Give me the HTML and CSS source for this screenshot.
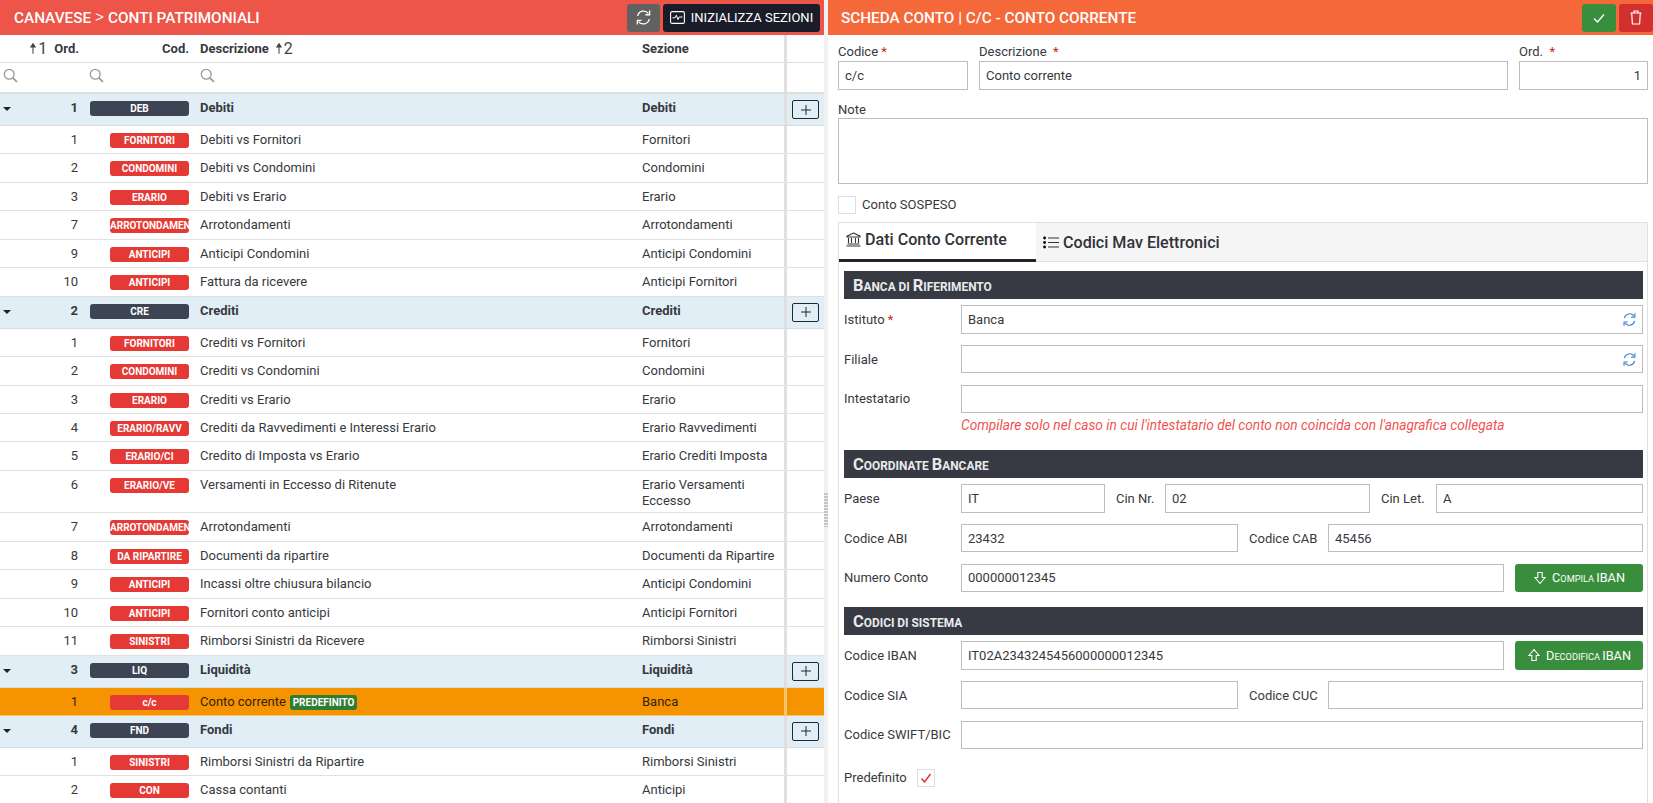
FILE: index.html
```html
<!DOCTYPE html>
<html lang="it">
<head>
    <meta charset="UTF-8">
    <meta name="viewport" content="width=device-width, initial-scale=1.0">
    <title>Conti patrimoniali</title>
    <link rel="stylesheet" href="styles.css">
</head>
<body>
    <svg class="icon-defs" width="0" height="0">
        <defs>
            <symbol id="i-search" viewBox="0 0 14 14"><circle cx="5.8" cy="5.8" r="4.6" fill="none" stroke="currentColor" stroke-width="1.2"/><path d="M9.2 9.2 L13 13" fill="none" stroke="currentColor" stroke-width="1.6"/></symbol>
            <symbol id="i-sync" viewBox="0 0 16 16"><path d="M2.6 6.6 A5.6 5.6 0 0 1 12.6 4.2 M13.4 9.4 A5.6 5.6 0 0 1 3.4 11.8" fill="none" stroke="currentColor" stroke-width="1.2"/><path d="M13.8 1.4 V5.4 H9.8 M2.2 14.6 V10.6 H6.2" fill="none" stroke="currentColor" stroke-width="1.2"/></symbol>
            <symbol id="i-up" viewBox="0 0 8 16"><path d="M4 15 V3 M1 6 L4 1.5 L7 6 Z" fill="currentColor" stroke="currentColor" stroke-width="1.4"/></symbol>
            <symbol id="i-plus" viewBox="0 0 12 12"><path d="M6 1 V11 M1 6 H11" fill="none" stroke="currentColor" stroke-width="1"/></symbol>
            <symbol id="i-in" viewBox="0 0 14 14"><path d="M4.8 1.5 H9.2 V6.5 H12 L7 12.5 L2 6.5 H4.8 Z" fill="none" stroke="currentColor" stroke-width="1.1"/></symbol>
            <symbol id="i-out" viewBox="0 0 14 14"><path d="M4.8 12.5 H9.2 V7.5 H12 L7 1.5 L2 7.5 H4.8 Z" fill="none" stroke="currentColor" stroke-width="1.1"/></symbol>
        </defs>
    </svg>

    <div class="page">
        <section class="panel-left">
            <header class="bar bar-red">
                <h1 class="bar-title">CANAVESE <span class="crumb">&gt;</span> CONTI PATRIMONIALI</h1>
                <div class="bar-actions">
                    <button class="btn btn-grey"><svg width="17" height="17"><use href="#i-sync"/></svg></button>
                    <button class="btn btn-dark">
                        <svg width="15" height="13" viewBox="0 0 15 13"><rect x="0.6" y="0.6" width="13.8" height="11.8" rx="1.5" fill="none" stroke="currentColor" stroke-width="1.1"/><path d="M2.5 6.8 H5 L6.3 4.2 L8 8.6 L9.2 6 H12.5" fill="none" stroke="currentColor" stroke-width="1"/></svg>
                        INIZIALIZZA SEZIONI
                    </button>
                </div>
            </header>

            <div class="row row-head">
                <div class="c-ord"><span class="sort"><svg width="6" height="13"><use href="#i-up"/></svg>1</span><b>Ord.</b></div>
                <div class="c-cod"><b>Cod.</b></div>
                <div class="c-desc"><b>Descrizione</b><span class="sort sort-after"><svg width="6" height="13"><use href="#i-up"/></svg>2</span></div>
                <div class="c-sez"><b>Sezione</b></div>
                <div class="c-act"></div>
            </div>
            <div class="row row-filter">
                <div class="c-ord"><svg class="lens" width="15" height="15"><use href="#i-search"/></svg></div>
                <div class="c-cod"><svg class="lens" width="15" height="15"><use href="#i-search"/></svg></div>
                <div class="c-desc"><svg class="lens" width="15" height="15"><use href="#i-search"/></svg></div>
                <div class="c-sez"></div>
                <div class="c-act"></div>
            </div>

            <div class="row row-group">
                <div class="c-ord"><i class="caret"></i>1</div>
                <div class="c-cod"><span class="tag tag-dark">DEB</span></div>
                <div class="c-desc">Debiti</div>
                <div class="c-sez">Debiti</div>
                <div class="c-act"><button class="btn-add"><svg width="12" height="12"><use href="#i-plus"/></svg></button></div>
            </div>
            <div class="row"><div class="c-ord">1</div><div class="c-cod"><span class="tag">FORNITORI</span></div><div class="c-desc">Debiti vs Fornitori</div><div class="c-sez">Fornitori</div><div class="c-act"></div></div>
            <div class="row"><div class="c-ord">2</div><div class="c-cod"><span class="tag">CONDOMINI</span></div><div class="c-desc">Debiti vs Condomini</div><div class="c-sez">Condomini</div><div class="c-act"></div></div>
            <div class="row"><div class="c-ord">3</div><div class="c-cod"><span class="tag">ERARIO</span></div><div class="c-desc">Debiti vs Erario</div><div class="c-sez">Erario</div><div class="c-act"></div></div>
            <div class="row"><div class="c-ord">7</div><div class="c-cod"><span class="tag">ARROTONDAMENTI</span></div><div class="c-desc">Arrotondamenti</div><div class="c-sez">Arrotondamenti</div><div class="c-act"></div></div>
            <div class="row"><div class="c-ord">9</div><div class="c-cod"><span class="tag">ANTICIPI</span></div><div class="c-desc">Anticipi Condomini</div><div class="c-sez">Anticipi Condomini</div><div class="c-act"></div></div>
            <div class="row"><div class="c-ord">10</div><div class="c-cod"><span class="tag">ANTICIPI</span></div><div class="c-desc">Fattura da ricevere</div><div class="c-sez">Anticipi Fornitori</div><div class="c-act"></div></div>

            <div class="row row-group">
                <div class="c-ord"><i class="caret"></i>2</div>
                <div class="c-cod"><span class="tag tag-dark">CRE</span></div>
                <div class="c-desc">Crediti</div>
                <div class="c-sez">Crediti</div>
                <div class="c-act"><button class="btn-add"><svg width="12" height="12"><use href="#i-plus"/></svg></button></div>
            </div>
            <div class="row"><div class="c-ord">1</div><div class="c-cod"><span class="tag">FORNITORI</span></div><div class="c-desc">Crediti vs Fornitori</div><div class="c-sez">Fornitori</div><div class="c-act"></div></div>
            <div class="row"><div class="c-ord">2</div><div class="c-cod"><span class="tag">CONDOMINI</span></div><div class="c-desc">Crediti vs Condomini</div><div class="c-sez">Condomini</div><div class="c-act"></div></div>
            <div class="row"><div class="c-ord">3</div><div class="c-cod"><span class="tag">ERARIO</span></div><div class="c-desc">Crediti vs Erario</div><div class="c-sez">Erario</div><div class="c-act"></div></div>
            <div class="row"><div class="c-ord">4</div><div class="c-cod"><span class="tag">ERARIO/RAVV</span></div><div class="c-desc">Crediti da Ravvedimenti e Interessi Erario</div><div class="c-sez">Erario Ravvedimenti</div><div class="c-act"></div></div>
            <div class="row"><div class="c-ord">5</div><div class="c-cod"><span class="tag">ERARIO/CI</span></div><div class="c-desc">Credito di Imposta vs Erario</div><div class="c-sez">Erario Crediti Imposta</div><div class="c-act"></div></div>
            <div class="row row-tall"><div class="c-ord">6</div><div class="c-cod"><span class="tag">ERARIO/VE</span></div><div class="c-desc">Versamenti in Eccesso di Ritenute</div><div class="c-sez">Erario Versamenti Eccesso</div><div class="c-act"></div></div>
            <div class="row"><div class="c-ord">7</div><div class="c-cod"><span class="tag">ARROTONDAMENTI</span></div><div class="c-desc">Arrotondamenti</div><div class="c-sez">Arrotondamenti</div><div class="c-act"></div></div>
            <div class="row"><div class="c-ord">8</div><div class="c-cod"><span class="tag">DA RIPARTIRE</span></div><div class="c-desc">Documenti da ripartire</div><div class="c-sez">Documenti da Ripartire</div><div class="c-act"></div></div>
            <div class="row"><div class="c-ord">9</div><div class="c-cod"><span class="tag">ANTICIPI</span></div><div class="c-desc">Incassi oltre chiusura bilancio</div><div class="c-sez">Anticipi Condomini</div><div class="c-act"></div></div>
            <div class="row"><div class="c-ord">10</div><div class="c-cod"><span class="tag">ANTICIPI</span></div><div class="c-desc">Fornitori conto anticipi</div><div class="c-sez">Anticipi Fornitori</div><div class="c-act"></div></div>
            <div class="row"><div class="c-ord">11</div><div class="c-cod"><span class="tag">SINISTRI</span></div><div class="c-desc">Rimborsi Sinistri da Ricevere</div><div class="c-sez">Rimborsi Sinistri</div><div class="c-act"></div></div>

            <div class="row row-group">
                <div class="c-ord"><i class="caret"></i>3</div>
                <div class="c-cod"><span class="tag tag-dark">LIQ</span></div>
                <div class="c-desc">Liquidità</div>
                <div class="c-sez">Liquidità</div>
                <div class="c-act"><button class="btn-add"><svg width="12" height="12"><use href="#i-plus"/></svg></button></div>
            </div>
            <div class="row row-active"><div class="c-ord">1</div><div class="c-cod"><span class="tag">c/c</span></div><div class="c-desc">Conto corrente <span class="tag-default">PREDEFINITO</span></div><div class="c-sez">Banca</div><div class="c-act"></div></div>

            <div class="row row-group">
                <div class="c-ord"><i class="caret"></i>4</div>
                <div class="c-cod"><span class="tag tag-dark">FND</span></div>
                <div class="c-desc">Fondi</div>
                <div class="c-sez">Fondi</div>
                <div class="c-act"><button class="btn-add"><svg width="12" height="12"><use href="#i-plus"/></svg></button></div>
            </div>
            <div class="row"><div class="c-ord">1</div><div class="c-cod"><span class="tag">SINISTRI</span></div><div class="c-desc">Rimborsi Sinistri da Ripartire</div><div class="c-sez">Rimborsi Sinistri</div><div class="c-act"></div></div>
            <div class="row"><div class="c-ord">2</div><div class="c-cod"><span class="tag">CON</span></div><div class="c-desc">Cassa contanti</div><div class="c-sez">Anticipi</div><div class="c-act"></div></div>
        </section>

        <div class="splitter"><span class="grip"></span></div>

        <section class="panel-right">
            <header class="bar bar-orange">
                <h1 class="bar-title">SCHEDA CONTO | C/C - CONTO CORRENTE</h1>
                <div class="bar-actions bar-actions-flush">
                    <button class="btn btn-green"><svg width="14" height="14" viewBox="0 0 14 14"><path d="M2 7.5 L5.5 11 L12 3.5" fill="none" stroke="currentColor" stroke-width="1.3"/></svg></button>
                    <button class="btn btn-red"><svg width="12" height="15" viewBox="0 0 12 15"><path d="M0.5 3 H11.5 M4 3 V1 H8 V3 M1.7 3 L2.4 14 H9.6 L10.3 3" fill="none" stroke="currentColor" stroke-width="1.2"/></svg></button>
                </div>
            </header>

            <div class="form">
                <div class="top-fields">
                    <div class="field field-code"><label>Codice <em>*</em></label><input type="text" value="c/c"></div>
                    <div class="field field-desc"><label>Descrizione &nbsp;<em>*</em></label><input type="text" value="Conto corrente"></div>
                    <div class="field field-ord"><label>Ord. &nbsp;<em>*</em></label><input class="num" type="text" value="1"></div>
                </div>
                <div class="field field-note"><label>Note</label><textarea></textarea></div>
                <div class="check-row"><span class="check"></span><span>Conto SOSPESO</span></div>

                <div class="tabs">
                    <div class="tab-bar">
                        <div class="tab tab-on">
                            <svg width="15" height="15" viewBox="0 0 15 15"><path d="M7.5 1 L14 4.2 V5 H1 V4.2 Z M2.5 6 V11 M5.5 6 V11 M9.5 6 V11 M12.5 6 V11 M1.5 12 H13.5 M0.5 14 H14.5" fill="none" stroke="currentColor" stroke-width="1.1"/></svg>
                            Dati Conto Corrente
                        </div>
                        <div class="tab tab-off">
                            <svg width="16" height="13" viewBox="0 0 16 13"><path d="M5 2 H16 M5 6.5 H16 M5 11 H16" fill="none" stroke="currentColor" stroke-width="1.2"/><circle cx="1.6" cy="2" r="1.4"/><circle cx="1.6" cy="6.5" r="1.4"/><circle cx="1.6" cy="11" r="1.4"/></svg>
                            Codici Mav Elettronici
                        </div>
                    </div>
                    <div class="tab-body">
                        <h2 class="sect"><span class="cap">B</span>anca di <span class="cap">R</span>iferimento</h2>
                        <div class="frow frow-first"><label class="lbl">Istituto <em>*</em></label><div class="lookup"><input type="text" value="Banca"><svg class="lookup-ico" width="15" height="15"><use href="#i-sync"/></svg></div></div>
                        <div class="frow"><label class="lbl">Filiale</label><div class="lookup"><input type="text"><svg class="lookup-ico" width="15" height="15"><use href="#i-sync"/></svg></div></div>
                        <div class="frow"><label class="lbl">Intestatario</label><input type="text"></div>
                        <p class="hint">Compilare solo nel caso in cui l'intestatario del conto non coincida con l'anagrafica collegata</p>

                        <h2 class="sect sect-gap-a"><span class="cap">C</span>oordinate <span class="cap">B</span>ancare</h2>
                        <div class="frow frow-first">
                            <label class="lbl">Paese</label><input class="w-paese" type="text" value="IT">
                            <label class="lbl-in w-cin">Cin Nr.</label><input class="w-nr" type="text" value="02">
                            <label class="lbl-in w-let">Cin Let.</label><input type="text" value="A">
                        </div>
                        <div class="frow">
                            <label class="lbl">Codice ABI</label><input class="w-half" type="text" value="23432">
                            <label class="lbl-in w-cab">Codice CAB</label><input type="text" value="45456">
                        </div>
                        <div class="frow">
                            <label class="lbl">Numero Conto</label><input type="text" value="000000012345">
                            <button class="btn-iban"><svg width="14" height="14"><use href="#i-in"/></svg><span><span class="cap">C</span>ompila <span class="cap">IBAN</span></span></button>
                        </div>

                        <h2 class="sect sect-gap-b"><span class="cap">C</span>odici di sistema</h2>
                        <div class="frow frow-first">
                            <label class="lbl">Codice IBAN</label><input type="text" value="IT02A2343245456000000012345">
                            <button class="btn-iban"><svg width="14" height="14"><use href="#i-out"/></svg><span><span class="cap">D</span>ecodifica <span class="cap">IBAN</span></span></button>
                        </div>
                        <div class="frow">
                            <label class="lbl">Codice SIA</label><input class="w-half" type="text">
                            <label class="lbl-in w-cab">Codice CUC</label><input type="text">
                        </div>
                        <div class="frow"><label class="lbl">Codice SWIFT/BIC</label><input type="text"></div>
                        <div class="frow frow-check">
                            <label class="lbl lbl-check">Predefinito</label>
                            <span class="check"><svg width="12" height="12" viewBox="0 0 12 12"><path d="M1.5 6.5 L4.5 10 L10.5 2" fill="none" stroke="#e53935" stroke-width="1.6"/></svg></span>
                        </div>
                    </div>
                </div>
            </div>
        </section>
    </div>
</body>
</html>
```

FILE: styles.css
```css
:root {
    --red-bar: #ec5548;
    --orange-bar: #f4683a;
    --tag-red: #e53935;
    --tag-dark: #3d4454;
    --line: #e0e0e0;
    --input-line: #bdbdbd;
    --text: #37393d;
    --font-body: 'Roboto', 'Liberation Sans', sans-serif;
}

* {
    box-sizing: border-box;
}

html, body {
    margin: 0;
    height: 100%;
    overflow: hidden;
}

body {
    font-family: var(--font-body);
    font-size: 13px;
    color: var(--text);
    background: #fff;
}

.icon-defs {
    position: absolute;
}

.page {
    display: flex;
    height: 803px;
    overflow: hidden;
}

/* top bars */
.bar {
    height: 35px;
    display: flex;
    align-items: center;
    justify-content: space-between;
    color: #fff;
}

.bar-red {
    background: var(--red-bar);
    padding: 0 4px 0 14px;
}

.bar-orange {
    background: var(--orange-bar);
    padding: 0 0 0 13px;
}

.bar-title {
    margin: 0;
    font-size: 15.3px;
    font-weight: 500;
}

.crumb {
    font-weight: 300;
    font-size: 18px;
    line-height: 1;
}

.bar-actions {
    display: flex;
    gap: 3px;
}

.btn {
    height: 28px;
    border: none;
    border-radius: 3px;
    color: #fff;
    font-family: var(--font-body);
    display: flex;
    align-items: center;
    justify-content: center;
    padding: 0;
}

.btn-grey {
    width: 33px;
    background: #616161;
}

.btn-dark {
    width: 157px;
    gap: 6px;
    background: #1b1c2a;
    font-size: 13px;
    font-weight: 400;
}

.btn-green {
    width: 34px;
    background: #388e3c;
}

.btn-red {
    width: 34px;
    background: #d32f2f;
}

/* left table */
.panel-left {
    width: 824px;
    flex: none;
    overflow: hidden;
}

.row {
    display: grid;
    grid-template-columns: 84px 111px 442px 150px 37px;
    height: 28.45px;
    border-bottom: 1px solid var(--line);
    line-height: 16px;
}

.row > div {
    padding-top: 6px;
    white-space: nowrap;
}

.c-ord {
    position: relative;
    text-align: right;
    padding-right: 6px;
}

.c-cod {
    padding-right: 6px;
    display: flex;
    justify-content: flex-end;
    align-items: flex-start;
}

.c-desc {
    padding-left: 5px;
}

.c-sez {
    padding-left: 5px;
    padding-right: 5px;
    border-right: 3px solid var(--line);
}

.row .c-sez {
    white-space: normal;
}

.c-act {
    display: flex;
    justify-content: center;
}

.row-head {
    height: 28px;
    border-bottom: 1px solid #ddd;
}

.row-head > div {
    display: flex;
    align-items: center;
    padding-top: 0;
}

.row-head .c-ord {
    justify-content: flex-end;
    padding-right: 5px;
}

.row-head b {
    font-weight: 700;
}

.sort {
    display: inline-flex;
    align-items: center;
    gap: 2px;
    font-size: 16px;
    margin-right: 7px;
    color: #444;
}

.sort-after {
    margin: 0 0 0 7px;
}

.row-filter {
    height: 31px;
    border-bottom: 2px solid #ddd;
}

.row-filter .c-ord {
    text-align: left;
    padding-left: 3px;
}

.row-filter .c-cod {
    justify-content: flex-start;
    padding-left: 5px;
}

.row-filter .c-desc {
    padding-left: 5px;
}

.row-filter > div {
    padding-top: 5px;
}

.lens {
    color: #999;
}

.row-group {
    height: 32px;
    background: #e1eef6;
    font-weight: 700;
    border-bottom: 1px solid #d5dde2;
}

.row-group > div {
    padding-top: 6.4px;
}

.row .c-cod .tag-dark {
    margin-top: 1px;
}

.row-group .c-act {
    padding-top: 6px;
}

.row-group .tag {
    width: 99px;
}

.row-tall {
    height: 42.6px;
}

.row-active {
    background: #f59300;
    color: #33240c;
    height: 28px;
    border-bottom-color: #f4c36e;
}

.row-active .c-sez {
    border-right-color: #f7c472;
}

.caret {
    position: absolute;
    left: 3px;
    top: 13px;
    width: 0;
    height: 0;
    border-left: 4px solid transparent;
    border-right: 4px solid transparent;
    border-top: 4px solid #222;
}

.tag {
    display: block;
    width: 79px;
    height: 15px;
    margin-top: 1px;
    border-radius: 3px;
    background: var(--tag-red);
    color: #fff;
    font-size: 10px;
    font-weight: 700;
    line-height: 15px;
    text-align: center;
    overflow: hidden;
    white-space: nowrap;
}

.tag-dark {
    background: var(--tag-dark);
}

.tag-default {
    display: inline-block;
    height: 15px;
    padding: 0 2.5px;
    margin-left: 1px;
    border-radius: 3px;
    background: #2e7d32;
    color: #fff;
    font-size: 10px;
    font-weight: 700;
    line-height: 15px;
    vertical-align: top;
    margin-top: 1px;
}

.btn-add {
    width: 27px;
    height: 19px;
    padding: 0;
    border: 1px solid #1f2933;
    border-radius: 2px;
    background: transparent;
    color: #1f2933;
    display: flex;
    align-items: center;
    justify-content: center;
}

/* splitter */
.splitter {
    width: 4px;
    flex: none;
    background: #f1f1f1;
    padding-top: 493px;
}

.grip {
    display: block;
    width: 4px;
    height: 34px;
    background: repeating-linear-gradient(to bottom, #c4c4c4 0 2px, transparent 2px 3px);
}

/* right form */
.panel-right {
    flex: 1;
    min-width: 0;
    overflow: hidden;
}

.form {
    padding: 8px 5px 0 10px;
}

label em {
    font-style: normal;
    color: #c62828;
}

input, textarea {
    display: block;
    width: 100%;
    height: 28.5px;
    border: 1px solid var(--input-line);
    border-radius: 0;
    padding: 0 6px;
    font-family: var(--font-body);
    font-size: 13px;
    color: var(--text);
    background: #fff;
    outline: none;
}

.top-fields {
    display: flex;
    gap: 11px;
}

.field label {
    display: block;
    height: 18px;
    line-height: 17px;
}

.field-code {
    width: 130px;
}

.field-desc {
    flex: 1;
}

.field-ord {
    width: 129px;
}

.num {
    text-align: right;
}

.field-note {
    margin-top: 11px;
}

.field-note label {
    height: 17px;
}

textarea {
    height: 66px;
    resize: none;
}

.check-row {
    display: flex;
    align-items: center;
    gap: 6px;
    margin-top: 12px;
}

.check {
    width: 18px;
    height: 18px;
    border: 1px solid #ddd;
    display: flex;
    align-items: center;
    justify-content: center;
    flex: none;
}

.tabs {
    margin-top: 8px;
    border: 1px solid var(--line);
    border-bottom: none;
    height: 600px;
}

.tab-bar {
    display: flex;
    height: 39px;
    background: #f5f5f5;
    border-bottom: 1px solid var(--line);
}

.tab {
    display: flex;
    align-items: center;
    gap: 4px;
    padding: 0 0 0 7px;
    font-size: 16.1px;
    font-weight: 500;
    color: #30333a;
}

.tab-on {
    width: 197px;
    background: #fff;
    border-bottom: 3px solid #22242a;
    height: 39px;
    padding-bottom: 2px;
}

.tab-off {
    padding-top: 1px;
}

.tab-body {
    padding: 9.5px 4px 0 5px;
}

.cap {
    font-size: 1.38em;
}

.sect {
    margin: 0;
    height: 28px;
    line-height: 29px;
    padding-left: 9px;
    background: #373a42;
    color: #e9eaec;
    font-size: 11.9px;
    font-weight: 700;
    text-transform: uppercase;
}

.sect-gap-a {
    margin-top: 17.2px;
}

.sect-gap-b {
    margin-top: 15px;
}

.frow {
    display: flex;
    align-items: center;
    height: 28.5px;
    margin-top: 11.25px;
}

.frow-first {
    margin-top: 6px;
}

.frow input {
    flex: 1;
    width: auto;
    min-width: 0;
}

.lbl {
    width: 117px;
    flex: none;
}

.lbl-in {
    flex: none;
    padding-left: 11px;
}

.w-paese { flex: none !important; width: 144px !important; }
.w-nr { flex: none !important; width: 205px !important; }
.w-half { flex: none !important; width: 277px !important; }
.w-cin { width: 60px; }
.w-let { width: 66px; }
.w-cab { width: 90px; }

.lookup {
    flex: 1;
    position: relative;
    height: 28.5px;
}

.lookup input {
    width: 100%;
}

.lookup-ico {
    position: absolute;
    right: 6px;
    top: 7px;
    color: #3f7fd0;
}

.hint {
    margin: 4px 0 0 117px;
    height: 16px;
    line-height: 16px;
    color: #ef5350;
    font-size: 13.7px;
    font-style: italic;
    white-space: nowrap;
}

.btn-iban {
    width: 128px;
    height: 28.5px;
    margin-left: 11px;
    flex: none;
    border: none;
    border-radius: 3px;
    background: #388e3c;
    color: #fff;
    font-family: var(--font-body);
    font-size: 9.2px;
    font-weight: 400;
    text-transform: uppercase;
    display: flex;
    align-items: center;
    justify-content: center;
    gap: 5px;
    padding: 0;
}

.frow-check {
    height: 18px;
    margin-top: 19.5px;
}

.lbl-check {
    width: 73px;
}
```
